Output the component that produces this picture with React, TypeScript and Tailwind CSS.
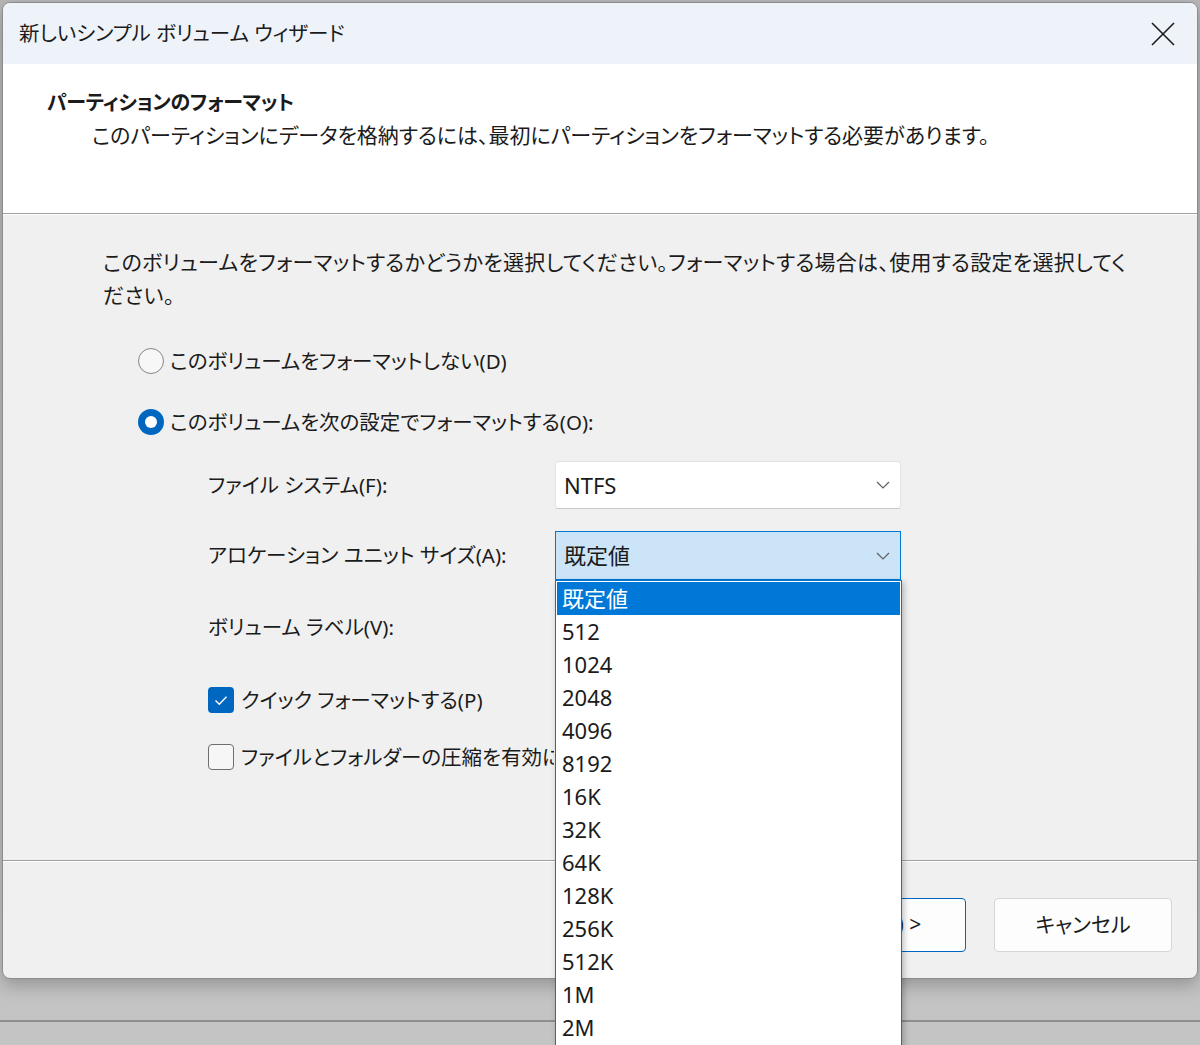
import React from 'react';

const sizes = ['既定値', '512', '1024', '2048', '4096', '8192', '16K', '32K', '64K', '128K', '256K', '512K', '1M', '2M'];

const Chevron = () => (
  <svg width="14" height="8" viewBox="0 0 14 8" fill="none" className="text-[#5f5f5f]">
    <path d="M1 1l6 6 6-6" stroke="currentColor" strokeWidth="1.2" />
  </svg>
);

const Radio = ({ checked }: { checked?: boolean }) =>
  checked ? (
    <div className="w-[26px] h-[26px] rounded-full bg-[#0067c0] flex items-center justify-center">
      <div className="w-[12px] h-[12px] rounded-full bg-white" />
    </div>
  ) : (
    <div className="w-[26px] h-[26px] rounded-full border border-[#858585] bg-[#f7f7f7]" />
  );

const Checkbox = ({ checked }: { checked?: boolean }) =>
  checked ? (
    <div className="w-[26px] h-[26px] rounded-[4px] bg-[#0067c0] flex items-center justify-center">
      <svg width="14" height="11" viewBox="0 0 14 11" fill="none">
        <path d="M1.5 5.5l3.8 3.8L12.5 1.8" stroke="white" strokeWidth="1.4" />
      </svg>
    </div>
  ) : (
    <div className="w-[26px] h-[26px] rounded-[4px] border border-[#6e6e6e] bg-[#f6f6f6]" />
  );

export default function App() {
  return (
    <div className="relative h-[1045px] overflow-hidden bg-gradient-to-b from-[#b8b8b8] to-[#c4c4c4] pt-[2px] text-[#1b1b1b] font-['Noto_Sans','Noto_Sans_CJK_JP',sans-serif] [font-feature-settings:'palt']">
      {/* window */}
      <div className="ml-[2px] w-[1196px] h-[977px] rounded-[8px] border border-[#8c8c8c] bg-[#f0f0f0] overflow-hidden flex flex-col shadow-[0_6px_18px_rgba(0,0,0,0.25)]">
        {/* title bar */}
        <div className="h-[61px] shrink-0 bg-[#eef3f9] flex items-center justify-between pl-[16px] pr-[22px]">
          <span className="text-[20.5px] leading-none">新しいシンプル ボリューム ウィザード</span>
          <svg width="24" height="24" viewBox="0 0 24 24" fill="none">
            <path d="M1 1l22 22M23 1L1 23" stroke="#1b1b1b" strokeWidth="1.6" />
          </svg>
        </div>

        {/* header */}
        <div className="h-[149px] shrink-0 bg-white pt-[22px]">
          <div className="pl-[44px] text-[20px] leading-[33px] font-bold tracking-[-0.3px]">パーティションのフォーマット</div>
          <div className="pl-[89px] text-[21px] leading-[33px]">
            このパーティションにデータを格納するには、最初にパーティションをフォーマットする必要があります。
          </div>
        </div>
        <div className="h-px bg-[#a0a0a0] shrink-0" />
        <div className="h-px bg-white shrink-0" />

        {/* body */}
        <div className="flex-1 pt-[31px] pl-[100px]">
          <p className="text-[21px] leading-[33px] whitespace-nowrap tracking-[0.3px]">
            このボリュームをフォーマットするかどうかを選択してください。フォーマットする場合は、使用する設定を選択してく
            <br />
            ださい。
          </p>

          <div className="mt-[29px] ml-[35px] h-[40px] flex items-center gap-[6px]">
            <Radio />
            <span className="text-[20.5px]">このボリュームをフォーマットしない(D)</span>
          </div>
          <div className="mt-[21px] ml-[35px] h-[40px] flex items-center gap-[6px]">
            <Radio checked />
            <span className="text-[20.5px]">このボリュームを次の設定でフォーマットする(O):</span>
          </div>

          <div className="ml-[105px]">
            <div className="mt-[19px] flex items-center h-[48px]">
              <span className="w-[347px] text-[20.5px]">ファイル システム(F):</span>
              <div className="w-[346px] h-[48px] bg-white border border-[#e3e3e3] border-b-[#c8c8c8] rounded-[3px] flex items-center justify-between pl-[8px] pr-[10px]">
                <span className="text-[22px]">NTFS</span>
                <Chevron />
              </div>
            </div>
            <div className="mt-[22px] flex items-center h-[49px]">
              <span className="w-[347px] text-[20.5px]">アロケーション ユニット サイズ(A):</span>
              <div className="w-[346px] h-[49px] bg-[#cce4f7] border border-[#0078d4] flex items-center justify-between pl-[8px] pr-[10px]">
                <span className="text-[22px]">既定値</span>
                <Chevron />
              </div>
            </div>
            <div className="mt-[23px] flex items-center h-[48px]">
              <span className="w-[347px] text-[20.5px]">ボリューム ラベル(V):</span>
              <div className="w-[346px] h-[48px] bg-white border border-[#e3e3e3] border-b-[#8a8a8a] rounded-[3px]" />
            </div>
            <div className="mt-[29px] h-[40px] flex items-center gap-[7px]">
              <Checkbox checked />
              <span className="text-[20.5px]">クイック フォーマットする(P)</span>
            </div>
            <div className="mt-[17px] h-[40px] flex items-center gap-[7px]">
              <Checkbox />
              <span className="w-[313px] overflow-hidden whitespace-nowrap text-[20.5px]">ファイルとフォルダーの圧縮を有効にする(E)</span>
            </div>
          </div>
        </div>

        <div className="h-px bg-[#a0a0a0] shrink-0" />
        <div className="h-px bg-white shrink-0" />

        {/* footer */}
        <div className="h-[116px] shrink-0 flex justify-end items-start pt-[36px] pr-[25px] gap-[28px]">
          <div className="flex gap-[6px]">
            <button className="w-[178px] h-[54px] rounded-[4px] bg-[#fdfdfd] border border-[#d5d5d5] text-[21px]">&lt; 戻る(B)</button>
            <button className="w-[178px] h-[54px] rounded-[4px] bg-[#fdfdfd] border border-[#0067c0] text-[21px]">次へ(N) &gt;</button>
          </div>
          <button className="w-[178px] h-[54px] rounded-[4px] bg-[#fdfdfd] border border-[#d5d5d5] text-[21px]">キャンセル</button>
        </div>
      </div>

      <div className="mt-[41px] h-[2px] bg-[#8e8e8e]" />

      {/* dropdown list popup */}
      <div className="absolute left-[555px] top-[580px] w-[347px] bg-white border border-[#0078d4] p-px shadow-[2px_2px_6px_rgba(0,0,0,0.25)]">
        {sizes.map((s, i) => (
          <div
            key={s}
            className={
              i === 0
                ? 'h-[33px] flex items-center pl-[5px] bg-[#0078d7] text-white text-[22px]'
                : 'h-[33px] flex items-center pl-[5px] text-[22px]'
            }
          >
            {s}
          </div>
        ))}
      </div>
    </div>
  );
}
